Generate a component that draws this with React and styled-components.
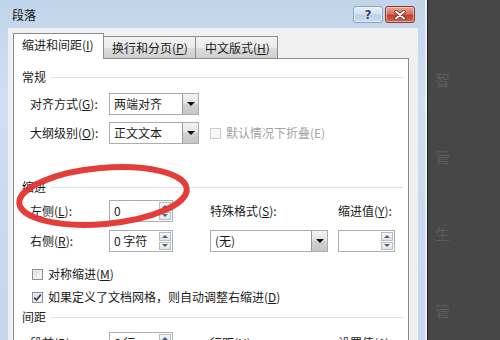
import React from 'react';
import styled, { createGlobalStyle } from 'styled-components';

const Global = createGlobalStyle`
  html, body { margin: 0; padding: 0; }
  body {
    width: 500px; height: 340px; overflow: hidden;
    font-family: "Noto Sans CJK SC", "Noto Sans", sans-serif;
    font-size: 12px; color: #1b1b1b;
  }
`;

const Screen = styled.div`
  position: relative;
  width: 500px; height: 340px;
  display: flex; overflow: hidden;
  background: #474747;
`;

const Window = styled.div`
  width: 425px; flex: none;
  display: flex; flex-direction: column;
  background: linear-gradient(to bottom, #c1d5ea 0%, #cfdff0 30%, #c9daed 60%, #c4d7eb 100%);
  border-right: 2px solid #eef3f8;
`;

const TitleBar = styled.div`
  height: 28px; flex: none;
  display: flex; align-items: flex-start;
  padding: 0 10px 0 12px;
  box-sizing: border-box;
`;

const Title = styled.span`
  margin-top: 7px;
  line-height: 16px;
  color: #111;
  flex: 1;
`;

const CaptionButtons = styled.div`
  display: flex; gap: 2px; margin-top: 6px;
`;

const CapBtn = styled.span`
  width: 30px; height: 17px; box-sizing: border-box;
  border: 1px solid ${p => (p.$close ? '#8b3a2d' : '#8da4c1')};
  border-radius: 3px;
  background: ${p => p.$close
    ? 'linear-gradient(to bottom, #e9a998 0%, #d9735f 45%, #c4402c 55%, #d2634c 100%)'
    : 'linear-gradient(to bottom, #e7eff8 0%, #d3e1f0 45%, #bcd0e6 55%, #cadbee 100%)'};
  display: flex; align-items: center; justify-content: center;
  box-shadow: inset 0 0 0 1px rgba(255,255,255,0.45);
`;

const HelpGlyph = styled.span`
  font-family: "DejaVu Sans", sans-serif;
  font-weight: bold; font-size: 12px; line-height: 12px;
  color: #2b4569;
  text-shadow: 0 0 2px #fff, 0 0 1px #fff;
`;

const Body = styled.div`
  flex: 1;
  margin: 0 7px 0 8px;
  background: #f0f0f0;
  padding: 5px 9px 0 5px;
  display: flex; flex-direction: column;
  min-height: 0;
`;

const Tabs = styled.div`
  height: 26px; flex: none;
  display: flex; align-items: flex-start;
  margin-bottom: -1px;
  position: relative; z-index: 1;
`;

const Tab = styled.span`
  width: ${p => p.$w}px; box-sizing: border-box; flex: none;
  height: ${p => (p.$active ? 26 : 22)}px;
  margin-top: ${p => (p.$active ? 0 : 3)}px;
  padding-left: ${p => p.$pl}px;
  border: 1px solid #898c95;
  border-bottom: none;
  ${p => (p.$active ? '' : 'border-left: none;')}
  background: ${p => (p.$active ? '#fff' : 'linear-gradient(to bottom, #f2f2f2 0%, #ebebeb 50%, #dddddd 51%, #cfcfcf 100%)')};
  display: flex; align-items: center;
  line-height: 16px;
  white-space: nowrap;
  padding-bottom: ${p => (p.$active ? 3 : 0)}px;
`;

const Panel = styled.div`
  flex: 1;
  background: #fff;
  border: 1px solid #898c95;
  border-bottom: none;
  padding: 10px 5px 0 8px;
  display: flex; flex-direction: column;
  min-height: 0;
`;

const SectionHead = styled.div`
  height: 16px; flex: none;
  display: flex; align-items: center; gap: 5px;
  margin-top: ${p => p.$mt || 0}px;
  line-height: 16px;
  &::after {
    content: ""; flex: 1; height: 1px; background: #dde1e6;
  }
`;

const Row = styled.div`
  height: 22px; flex: none;
  display: flex; align-items: center;
  padding-left: 8px;
  margin-top: ${p => p.$mt || 0}px;
`;

const Label = styled.span`
  width: ${p => p.$w || 79}px; flex: none;
  line-height: 16px; white-space: nowrap;
  color: ${p => (p.$disabled ? '#a3a3a3' : '#1b1b1b')};
`;

const SelectBox = styled.div`
  width: ${p => p.$w}px; height: 22px; flex: none;
  box-sizing: border-box;
  border: 1px solid #abadb3;
  background: #fff;
  display: flex; align-items: stretch;
`;

const FieldText = styled.span`
  flex: 1; padding-left: 4px;
  display: flex; align-items: center;
  line-height: 16px; white-space: nowrap;
`;

const DropBtn = styled.span`
  width: 16px; flex: none;
  box-sizing: border-box;
  border-left: 1px solid #9a9a9a;
  background: linear-gradient(to bottom, #f3f3f3 0%, #e4e4e4 45%, #cfcfcf 55%, #c6c6c6 100%);
  display: flex; align-items: center; justify-content: center;
  &::after {
    content: "";
    border-left: 4px solid transparent;
    border-right: 4px solid transparent;
    border-top: 4px solid #111;
  }
`;

const Spinner = styled.div`
  width: ${p => p.$w}px; height: 22px; flex: none;
  box-sizing: border-box;
  border: 1px solid #abadb3;
  background: #fff;
  display: flex; align-items: stretch;
`;

const SpinCol = styled.span`
  width: 12px; flex: none;
  display: flex; flex-direction: column; gap: 1px;
  padding: 1px 1px 1px 0;
`;

const SpinHalf = styled.span`
  flex: 1;
  box-sizing: border-box;
  border: 1px solid #b7bcc4;
  background: linear-gradient(to bottom, #f7f7f7, #e2e3e5);
  display: flex; align-items: center; justify-content: center;
  &::after {
    content: "";
    border-left: 3px solid transparent;
    border-right: 3px solid transparent;
    ${p => (p.$down ? 'border-top: 3px solid #4c5d7d;' : 'border-bottom: 3px solid #4c5d7d;')}
  }
`;

const CheckRow = styled.div`
  height: 16px; flex: none;
  display: flex; align-items: center; gap: 5px;
  padding-left: ${p => p.$pl ?? 10}px;
  margin-top: ${p => p.$mt || 0}px;
  line-height: 16px; white-space: nowrap;
  color: ${p => (p.$disabled ? '#a3a3a3' : '#1b1b1b')};
`;

const Box = styled.span`
  width: 11px; height: 11px; flex: none;
  box-sizing: border-box;
  border: 1px solid ${p => (p.$disabled ? '#c9c9c9' : '#8e8f8f')};
  background: ${p => (p.$disabled ? '#f6f6f6' : 'linear-gradient(135deg, #d6d6d6 0%, #f3f3f3 70%, #fdfdfd 100%)')};
  box-shadow: inset 0 0 0 1px ${p => (p.$disabled ? '#fbfbfb' : '#f0f0f0')};
  display: flex; align-items: center; justify-content: center;
`;

const IndentGrid = styled.div`
  display: grid;
  grid-template-columns: 79px 101px 128px auto;
  grid-template-rows: 22px 22px;
  row-gap: 8px;
  align-items: center;
  padding-left: 8px;
  margin-top: ${p => p.$mt || 0}px;
`;

const Dark = styled.div`
  flex: 1;
  border-left: 1px solid #1f1f1f;
  display: flex; flex-direction: column; align-items: flex-start;
  padding: 72px 0 0 7px;
  gap: 62px;
`;

const DocChar = styled.span`
  font-size: 15px; line-height: 15px;
  color: #5b5b5b;
`;

const Overlay = styled.svg`
  position: absolute; left: 0; top: 0;
  pointer-events: none;
`;

const Dropdown = ({ w, text }) => (
  <SelectBox $w={w}>
    <FieldText>{text}</FieldText>
    <DropBtn />
  </SelectBox>
);

const Spin = ({ w, text }) => (
  <Spinner $w={w}>
    <FieldText>{text}</FieldText>
    <SpinCol>
      <SpinHalf />
      <SpinHalf $down />
    </SpinCol>
  </Spinner>
);

const Check = () => (
  <svg width="9" height="9" viewBox="0 0 9 9">
    <path d="M1.2 4.6 L3.4 7 L7.8 1.6" fill="none" stroke="#2c3f63" strokeWidth="1.7" />
  </svg>
);

export default function App() {
  return (
    <>
      <Global />
      <Screen>
        <Window>
          <TitleBar>
            <Title>段落</Title>
            <CaptionButtons>
              <CapBtn><HelpGlyph>?</HelpGlyph></CapBtn>
              <CapBtn $close>
                <svg width="12" height="10" viewBox="0 0 12 10">
                  <path d="M2 1.5 L10 8.5 M10 1.5 L2 8.5" stroke="#5a2016" strokeWidth="3.4" strokeLinecap="round" />
                  <path d="M2 1.5 L10 8.5 M10 1.5 L2 8.5" stroke="#fff" strokeWidth="2" strokeLinecap="round" />
                </svg>
              </CapBtn>
            </CaptionButtons>
          </TitleBar>
          <Body>
            <Tabs>
              <Tab $active $w={91} $pl={8}><span>缩进和间距(<u>I</u>)</span></Tab>
              <Tab $w={92} $pl={8}><span>换行和分页(<u>P</u>)</span></Tab>
              <Tab $w={82} $pl={9}><span>中文版式(<u>H</u>)</span></Tab>
            </Tabs>
            <Panel>
              <SectionHead><span>常规</span></SectionHead>
              <Row $mt={8}>
                <Label>对齐方式(<u>G</u>):</Label>
                <Dropdown w={90} text="两端对齐" />
              </Row>
              <Row $mt={7}>
                <Label>大纲级别(<u>O</u>):</Label>
                <Dropdown w={90} text="正文文本" />
                <CheckRow $disabled $pl={11}>
                  <Box $disabled />
                  <span>默认情况下折叠(E)</span>
                </CheckRow>
              </Row>

              <SectionHead $mt={35}><span>缩进</span></SectionHead>
              <IndentGrid $mt={5}>
                <Label>左侧(<u>L</u>):</Label>
                <Spin w={64} text="0" />
                <Label>特殊格式(<u>S</u>):</Label>
                <Label>缩进值(<u>Y</u>):</Label>

                <Label>右侧(<u>R</u>):</Label>
                <Spin w={64} text="0 字符" />
                <Dropdown w={118} text="(无)" />
                <Spin w={57} text="" />
              </IndentGrid>
              <CheckRow $mt={14}>
                <Box />
                <span>对称缩进(<u>M</u>)</span>
              </CheckRow>
              <CheckRow $mt={7}>
                <Box><Check /></Box>
                <span>如果定义了文档网格，则自动调整右缩进(<u>D</u>)</span>
              </CheckRow>

              <SectionHead $mt={4}><span>间距</span></SectionHead>
              <IndentGrid $mt={7}>
                <Label>段前(<u>B</u>):</Label>
                <Spin w={64} text="0 行" />
                <Label>行距(<u>N</u>):</Label>
                <Label>设置值(<u>A</u>):</Label>
              </IndentGrid>
            </Panel>
          </Body>
        </Window>
        <Dark>
          <DocChar>智</DocChar>
          <DocChar>管</DocChar>
          <DocChar>生</DocChar>
          <DocChar>管</DocChar>
        </Dark>
        <Overlay width="500" height="340" viewBox="0 0 500 340">
          <ellipse cx="103" cy="196" rx="84" ry="28" transform="rotate(-5 103 196)"
            fill="none" stroke="#e0342f" strokeWidth="6" opacity="0.95" />
        </Overlay>
      </Screen>
    </>
  );
}
